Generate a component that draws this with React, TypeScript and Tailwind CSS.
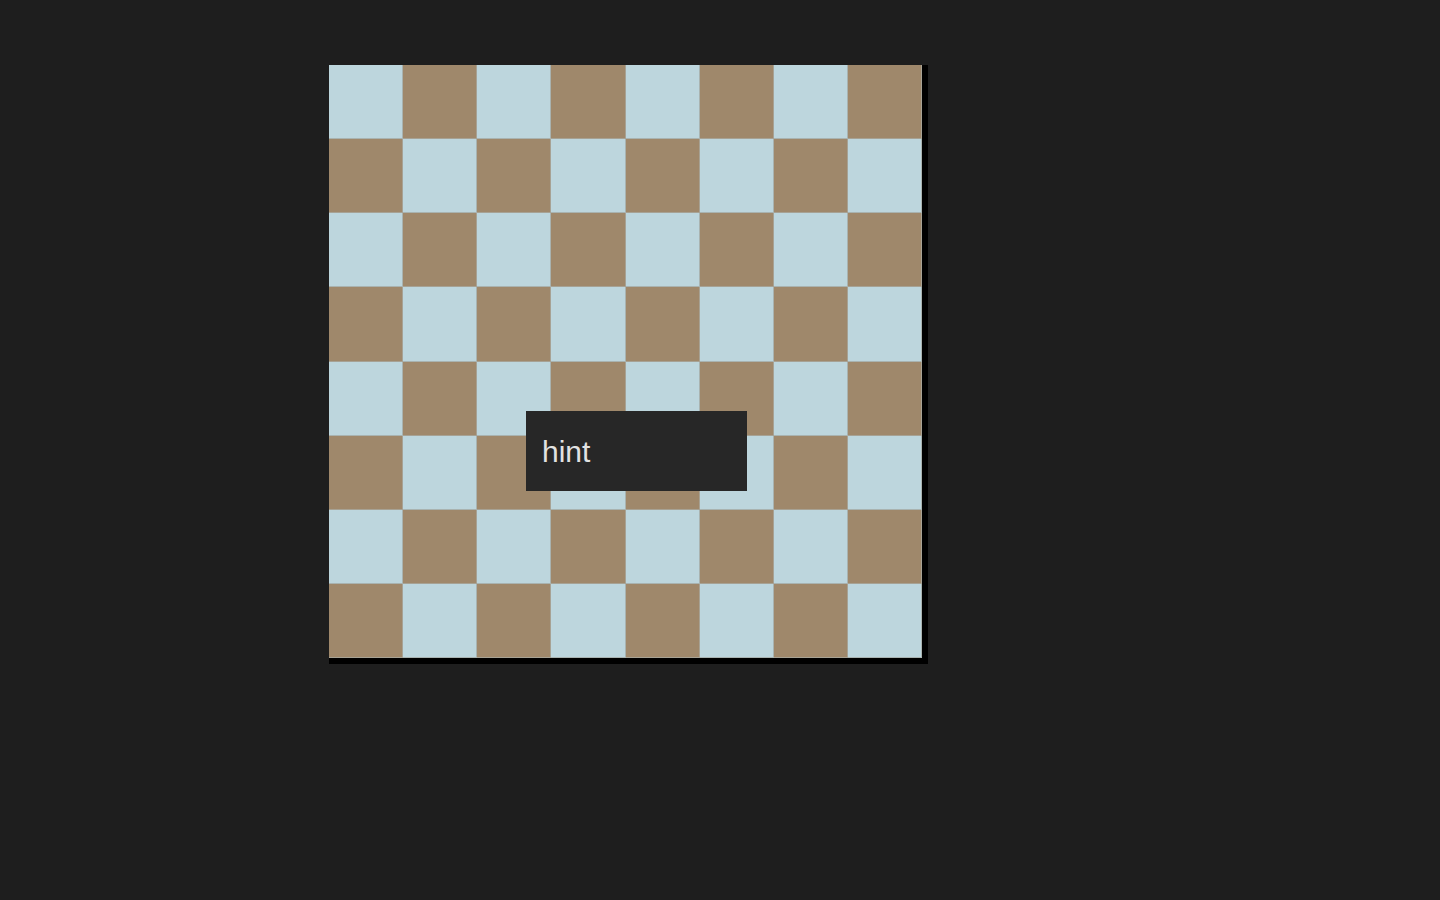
import React from "react";

export default function App() {
  const squares = [];
  for (let r = 0; r < 8; r++) {
    for (let c = 0; c < 8; c++) {
      const light = (r + c) % 2 === 0;
      squares.push(
        <div
          key={`${r}-${c}`}
          className={
            light
              ? "h-[74.125px] bg-[#bdd6dd] border-r border-b border-[#a9b3b0]"
              : "h-[74.125px] bg-[#9f886b] border-r border-b border-[#a7a294]"
          }
        />
      );
    }
  }
  return (
    <div className="min-h-screen w-full bg-[#1e1e1e] pl-[329px] pt-[65px]">
      <div className="relative w-fit border-r-[6px] border-b-[6px] border-black">
        <div className="grid w-[593px] grid-cols-8">{squares}</div>
        <div
          className="absolute left-[197px] top-[346px] flex h-[80px] w-[221px] items-center bg-[#272727] pl-[16px] text-[30px] text-[#e2e2e2]"
          style={{ fontFamily: '"Liberation Sans", Arial, sans-serif' }}
        >
          hint
        </div>
      </div>
    </div>
  );
}
